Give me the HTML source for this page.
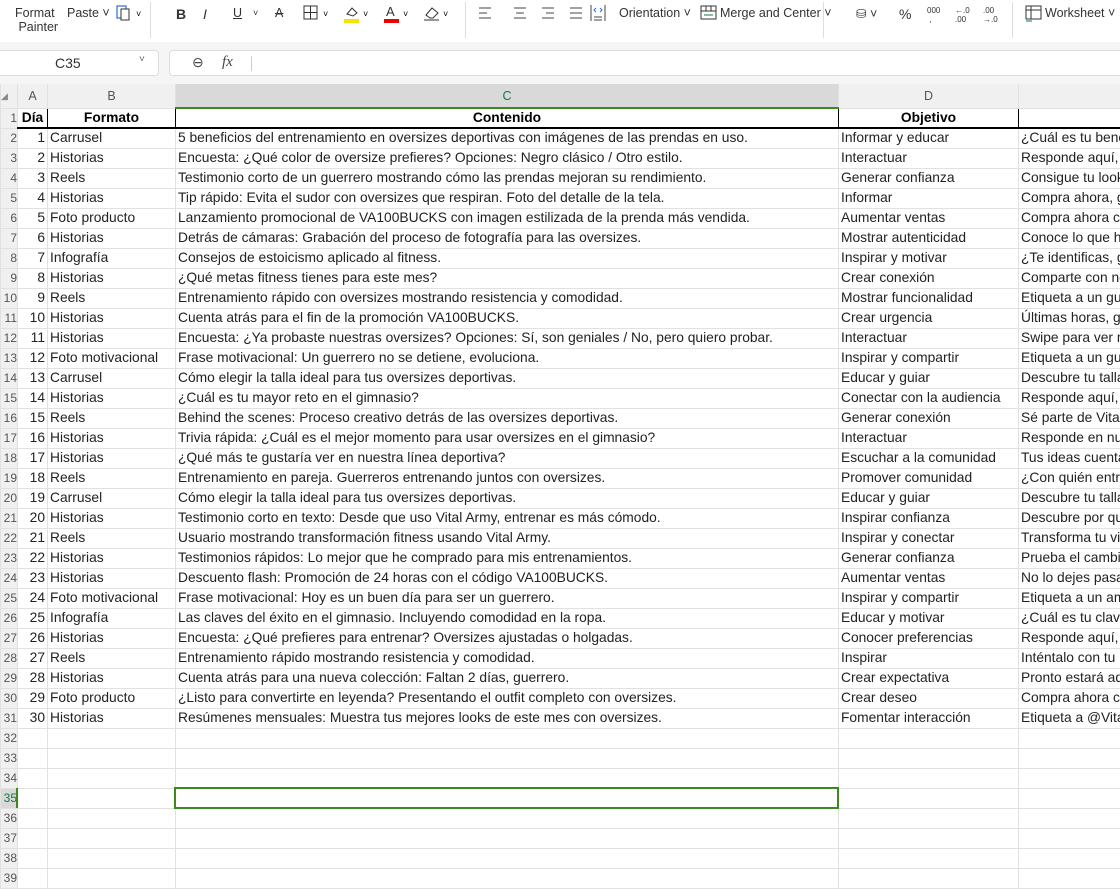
<!DOCTYPE html>
<html><head><meta charset="utf-8"><style>
*{box-sizing:border-box;margin:0;padding:0}
body{width:1120px;height:878px;overflow:hidden;background:#fff;font-family:"Liberation Sans",sans-serif;position:relative;color:#222}
.tb{position:absolute;left:0;top:0;width:1120px;height:42px;background:#fff;box-shadow:0 1px 3px rgba(0,0,0,.15);font-size:12.5px;color:#333}
.tb span{position:absolute;top:6px;white-space:nowrap}
.sep{position:absolute;top:2px;width:1px;height:36px;background:#ddd}
.gray{position:absolute;left:0;top:42px;width:1120px;height:42px;background:#f5f5f5}
.nb{position:absolute;left:-6px;top:50px;width:165px;height:26px;background:#fff;border:1px solid #ddd;border-radius:4px;font-size:14px;color:#333}
.fb{position:absolute;left:169px;top:50px;width:960px;height:26px;background:#fff;border:1px solid #ddd;border-radius:4px}
.grid{position:absolute;left:0;top:84px;width:1140px;overflow:hidden}
table{border-collapse:collapse;table-layout:fixed;font-size:13.8px;width:1137px}
td{height:20px;border:1px solid #e1e1e1;white-space:nowrap;overflow:hidden;padding:0 2px;line-height:18px}
td.rh{background:#f0f0f0;color:#555;text-align:right;padding:0;font-size:12px;border-color:#e1e1e1}
tr.ch td{height:24px;background:#f0f0f0;color:#555;text-align:center;font-size:12.5px;border-color:#e1e1e1;border-top:none}
tr.ch td.sel{background:#d9d9d9;color:#107c41;border-bottom:2px solid #3c8a1e}
tr.h1 td:not(.rh){font-weight:bold;text-align:center;border:1px solid #000;border-bottom:2px solid #000;color:#000}
td.n{text-align:right}
.selbox{position:absolute;left:174px;top:787px;width:665px;height:22px;border:2px solid #3c8a1e}
</style></head><body>
<div class="tb">
<span style="left:15px">Format<br>&nbsp;Painter</span>
<span style="left:67px">Paste ˅</span>
<span style="left:116px;top:4px"><svg width="30" height="18"><rect x="1" y="2" width="9" height="12" fill="none" stroke="#2b6fd6" stroke-width="1.2"/><rect x="5" y="5" width="8" height="11" fill="#fff" stroke="#333"/><text x="20" y="13" font-size="9">˅</text></svg></span>
<div class="sep" style="left:150px"></div>
<span style="left:176px;font-weight:bold;font-size:14px">B</span>
<span style="left:203px;font-style:italic;font-size:14px">I</span>
<span style="left:233px;text-decoration:underline">U</span><span style="left:253px;font-size:9px;top:8px">˅</span>
<span style="left:275px;text-decoration:line-through">A</span>
<span style="left:303px;top:4px"><svg width="30" height="18"><rect x="1" y="2" width="13" height="13" fill="none" stroke="#333"/><path d="M7.5 2V15M1 8.5H14" stroke="#333"/><text x="20" y="13" font-size="9">˅</text></svg></span>
<span style="left:343px;top:4px"><svg width="30" height="20"><path d="M4 10l5-6 5 5-4 3z" fill="none" stroke="#333"/><rect x="1" y="15" width="15" height="4" fill="#f5e400"/><text x="20" y="13" font-size="9">˅</text></svg></span>
<span style="left:383px;top:4px"><svg width="30" height="20"><text x="3" y="12" font-size="13" fill="#333">A</text><rect x="1" y="15" width="15" height="4" fill="#e00"/><text x="20" y="13" font-size="9">˅</text></svg></span>
<span style="left:423px;top:4px"><svg width="30" height="20"><path d="M3 11l6-7 6 5-5 5H7z M1 16h15" fill="none" stroke="#333"/><text x="20" y="13" font-size="9">˅</text></svg></span>
<div class="sep" style="left:465px"></div>
<span style="left:478px;top:4px"><svg width="110" height="18"><g stroke="#444"><path d="M1 4h12M1 9h8M1 14h12"/><path d="M36 4h12M38 9h8M36 14h12"/><path d="M64 4h12M68 9h8M64 14h12"/><path d="M92 4h12M92 9h12M92 14h12"/></g></svg></span>
<span style="left:590px;top:4px"><svg width="16" height="18"><path d="M1 1v16M15 1v16M4 13h8M4 16h8" stroke="#444"/><path d="M6 4l-2 2 2 2M10 4l2 2-2 2" stroke="#2b6fd6" fill="none"/></svg></span>
<span style="left:619px">Orientation ˅</span>
<span style="left:700px;top:4px"><svg width="18" height="18"><rect x="1" y="2" width="15" height="13" fill="none" stroke="#333"/><path d="M1 7h15M6 2v5M11 2v5" stroke="#333"/><path d="M4 11h9" stroke="#107c41"/></svg></span>
<span style="left:720px">Merge and Center ˅</span>
<div class="sep" style="left:823px"></div>
<span style="left:856px">⛁ ˅</span>
<span style="left:899px;font-size:14px">%</span>
<span style="left:927px;font-size:8px;top:6px">000<br>&nbsp;,</span>
<span style="left:955px;font-size:8px;top:6px">←.0<br>.00</span>
<span style="left:983px;font-size:8px;top:6px">.00<br>→.0</span>
<div class="sep" style="left:1012px"></div>
<span style="left:1025px;top:4px"><svg width="18" height="18"><rect x="1" y="2" width="15" height="13" fill="none" stroke="#333"/><path d="M1 6h15M6 2v13" stroke="#333"/><path d="M1 17h6" stroke="#107c41"/></svg></span>
<span style="left:1045px">Worksheet ˅</span>
</div>
<div class="gray"></div>
<div class="nb"><span style="position:absolute;left:60px;top:4px">C35</span><span style="position:absolute;left:144px;top:3px;font-size:10px;color:#666">˅</span></div>
<div class="fb"><span style="position:absolute;left:22px;top:3px;font-size:14px;color:#444">⊖</span><span style="position:absolute;left:52px;top:3px;font-style:italic;font-family:'Liberation Serif';font-size:15px;color:#444">fx</span><div style="position:absolute;left:81px;top:5px;width:1px;height:15px;background:#ccc"></div></div>
<div class="grid"><table>
<colgroup><col style="width:17px"><col style="width:30px"><col style="width:128px"><col style="width:663px"><col style="width:180px"><col style="width:119px"></colgroup>
<tr class="ch"><td class="rh" style="text-align:left;color:#888;font-size:9px">◢</td><td>A</td><td>B</td><td class="sel">C</td><td>D</td><td></td></tr>
<tr class="h1"><td class="rh">1</td><td>Día</td><td>Formato</td><td>Contenido</td><td>Objetivo</td><td></td></tr>
<tr><td class="rh">2</td><td class="n">1</td><td>Carrusel</td><td>5 beneficios del entrenamiento en oversizes deportivas con imágenes de las prendas en uso.</td><td>Informar y educar</td><td>¿Cuál es tu beneficio favorito?</td></tr>
<tr><td class="rh">3</td><td class="n">2</td><td>Historias</td><td>Encuesta: ¿Qué color de oversize prefieres? Opciones: Negro clásico / Otro estilo.</td><td>Interactuar</td><td>Responde aquí, guerrero</td></tr>
<tr><td class="rh">4</td><td class="n">3</td><td>Reels</td><td>Testimonio corto de un guerrero mostrando cómo las prendas mejoran su rendimiento.</td><td>Generar confianza</td><td>Consigue tu look</td></tr>
<tr><td class="rh">5</td><td class="n">4</td><td>Historias</td><td>Tip rápido: Evita el sudor con oversizes que respiran. Foto del detalle de la tela.</td><td>Informar</td><td>Compra ahora, guerrero</td></tr>
<tr><td class="rh">6</td><td class="n">5</td><td>Foto producto</td><td>Lanzamiento promocional de VA100BUCKS con imagen estilizada de la prenda más vendida.</td><td>Aumentar ventas</td><td>Compra ahora con</td></tr>
<tr><td class="rh">7</td><td class="n">6</td><td>Historias</td><td>Detrás de cámaras: Grabación del proceso de fotografía para las oversizes.</td><td>Mostrar autenticidad</td><td>Conoce lo que hay</td></tr>
<tr><td class="rh">8</td><td class="n">7</td><td>Infografía</td><td>Consejos de estoicismo aplicado al fitness.</td><td>Inspirar y motivar</td><td>¿Te identificas, guerrero?</td></tr>
<tr><td class="rh">9</td><td class="n">8</td><td>Historias</td><td>¿Qué metas fitness tienes para este mes?</td><td>Crear conexión</td><td>Comparte con nosotros</td></tr>
<tr><td class="rh">10</td><td class="n">9</td><td>Reels</td><td>Entrenamiento rápido con oversizes mostrando resistencia y comodidad.</td><td>Mostrar funcionalidad</td><td>Etiqueta a un guerrero</td></tr>
<tr><td class="rh">11</td><td class="n">10</td><td>Historias</td><td>Cuenta atrás para el fin de la promoción VA100BUCKS.</td><td>Crear urgencia</td><td>Últimas horas, guerrero</td></tr>
<tr><td class="rh">12</td><td class="n">11</td><td>Historias</td><td>Encuesta: ¿Ya probaste nuestras oversizes? Opciones: Sí, son geniales / No, pero quiero probar.</td><td>Interactuar</td><td>Swipe para ver más</td></tr>
<tr><td class="rh">13</td><td class="n">12</td><td>Foto motivacional</td><td>Frase motivacional: Un guerrero no se detiene, evoluciona.</td><td>Inspirar y compartir</td><td>Etiqueta a un guerrero</td></tr>
<tr><td class="rh">14</td><td class="n">13</td><td>Carrusel</td><td>Cómo elegir la talla ideal para tus oversizes deportivas.</td><td>Educar y guiar</td><td>Descubre tu talla</td></tr>
<tr><td class="rh">15</td><td class="n">14</td><td>Historias</td><td>¿Cuál es tu mayor reto en el gimnasio?</td><td>Conectar con la audiencia</td><td>Responde aquí, guerrero</td></tr>
<tr><td class="rh">16</td><td class="n">15</td><td>Reels</td><td>Behind the scenes: Proceso creativo detrás de las oversizes deportivas.</td><td>Generar conexión</td><td>Sé parte de Vital Army</td></tr>
<tr><td class="rh">17</td><td class="n">16</td><td>Historias</td><td>Trivia rápida: ¿Cuál es el mejor momento para usar oversizes en el gimnasio?</td><td>Interactuar</td><td>Responde en nuestras</td></tr>
<tr><td class="rh">18</td><td class="n">17</td><td>Historias</td><td>¿Qué más te gustaría ver en nuestra línea deportiva?</td><td>Escuchar a la comunidad</td><td>Tus ideas cuentan</td></tr>
<tr><td class="rh">19</td><td class="n">18</td><td>Reels</td><td>Entrenamiento en pareja. Guerreros entrenando juntos con oversizes.</td><td>Promover comunidad</td><td>¿Con quién entrenas?</td></tr>
<tr><td class="rh">20</td><td class="n">19</td><td>Carrusel</td><td>Cómo elegir la talla ideal para tus oversizes deportivas.</td><td>Educar y guiar</td><td>Descubre tu talla</td></tr>
<tr><td class="rh">21</td><td class="n">20</td><td>Historias</td><td>Testimonio corto en texto: Desde que uso Vital Army, entrenar es más cómodo.</td><td>Inspirar confianza</td><td>Descubre por qué</td></tr>
<tr><td class="rh">22</td><td class="n">21</td><td>Reels</td><td>Usuario mostrando transformación fitness usando Vital Army.</td><td>Inspirar y conectar</td><td>Transforma tu vida</td></tr>
<tr><td class="rh">23</td><td class="n">22</td><td>Historias</td><td>Testimonios rápidos: Lo mejor que he comprado para mis entrenamientos.</td><td>Generar confianza</td><td>Prueba el cambio</td></tr>
<tr><td class="rh">24</td><td class="n">23</td><td>Historias</td><td>Descuento flash: Promoción de 24 horas con el código VA100BUCKS.</td><td>Aumentar ventas</td><td>No lo dejes pasar</td></tr>
<tr><td class="rh">25</td><td class="n">24</td><td>Foto motivacional</td><td>Frase motivacional: Hoy es un buen día para ser un guerrero.</td><td>Inspirar y compartir</td><td>Etiqueta a un amigo</td></tr>
<tr><td class="rh">26</td><td class="n">25</td><td>Infografía</td><td>Las claves del éxito en el gimnasio. Incluyendo comodidad en la ropa.</td><td>Educar y motivar</td><td>¿Cuál es tu clave?</td></tr>
<tr><td class="rh">27</td><td class="n">26</td><td>Historias</td><td>Encuesta: ¿Qué prefieres para entrenar? Oversizes ajustadas o holgadas.</td><td>Conocer preferencias</td><td>Responde aquí, guerrero</td></tr>
<tr><td class="rh">28</td><td class="n">27</td><td>Reels</td><td>Entrenamiento rápido mostrando resistencia y comodidad.</td><td>Inspirar</td><td>Inténtalo con tu</td></tr>
<tr><td class="rh">29</td><td class="n">28</td><td>Historias</td><td>Cuenta atrás para una nueva colección: Faltan 2 días, guerrero.</td><td>Crear expectativa</td><td>Pronto estará aquí</td></tr>
<tr><td class="rh">30</td><td class="n">29</td><td>Foto producto</td><td>¿Listo para convertirte en leyenda? Presentando el outfit completo con oversizes.</td><td>Crear deseo</td><td>Compra ahora con</td></tr>
<tr><td class="rh">31</td><td class="n">30</td><td>Historias</td><td>Resúmenes mensuales: Muestra tus mejores looks de este mes con oversizes.</td><td>Fomentar interacción</td><td>Etiqueta a @VitalArmy</td></tr>
<tr><td class="rh">32</td><td></td><td></td><td></td><td></td><td></td></tr>
<tr><td class="rh">33</td><td></td><td></td><td></td><td></td><td></td></tr>
<tr><td class="rh">34</td><td></td><td></td><td></td><td></td><td></td></tr>
<tr><td class="rh" style="background:#d9d9d9;color:#107c41">35</td><td></td><td></td><td></td><td></td><td></td></tr>
<tr><td class="rh">36</td><td></td><td></td><td></td><td></td><td></td></tr>
<tr><td class="rh">37</td><td></td><td></td><td></td><td></td><td></td></tr>
<tr><td class="rh">38</td><td></td><td></td><td></td><td></td><td></td></tr>
<tr><td class="rh">39</td><td></td><td></td><td></td><td></td><td></td></tr>
</table></div>
<div style="position:absolute;left:16px;top:788px;width:2px;height:20px;background:#3c8a1e"></div>
<div class="selbox"></div>
</body></html>
